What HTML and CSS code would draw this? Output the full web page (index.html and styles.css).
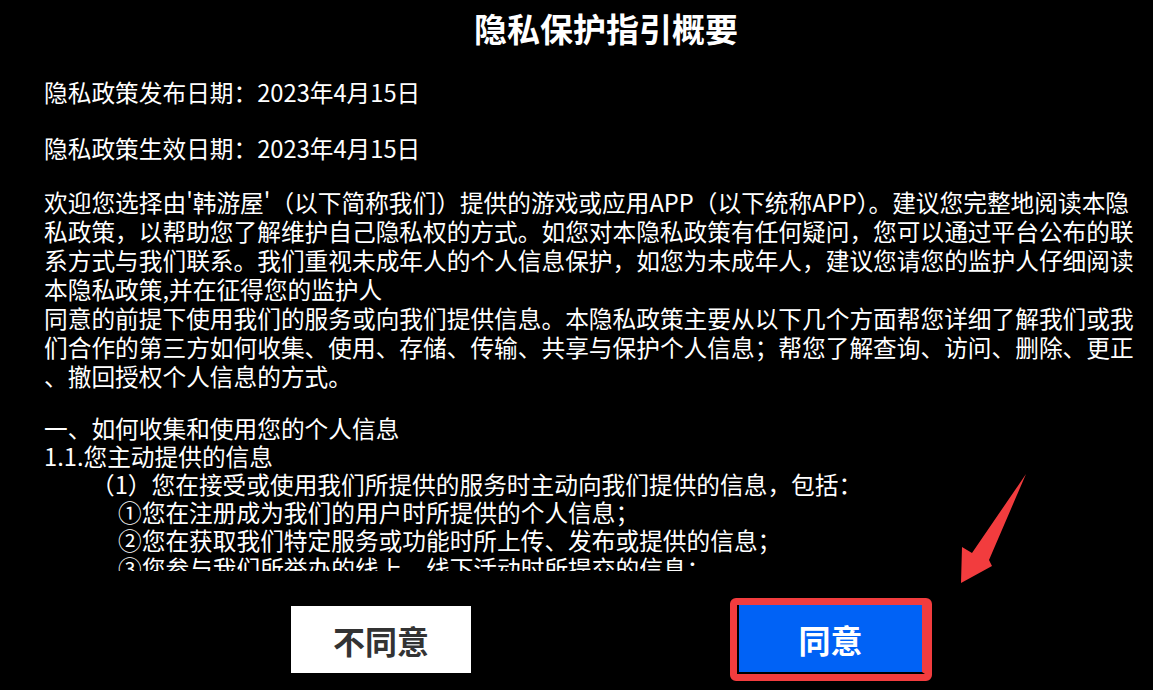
FILE: index.html
```html
<!DOCTYPE html>
<html lang="zh-CN">
<head>
    <meta charset="UTF-8">
    <meta name="viewport" content="width=device-width, initial-scale=1.0">
    <title>隐私保护指引概要</title>
    <link rel="stylesheet" href="styles.css">
</head>
<body>

    <div class="dialog">
        <h1 class="title">隐私保护指引概要</h1>

        <div class="policy">
            <p class="date">隐私政策发布日期：2023年4月15日</p>
            <p class="date date-last">隐私政策生效日期：2023年4月15日</p>
            <p class="intro">欢迎您选择由'韩游屋'（以下简称我们）提供的游戏或应用APP（以下统称APP）。建议您完整地阅读本隐私政策，以帮助您了解维护自己隐私权的方式。如您对本隐私政策有任何疑问，您可以通过平台公布的联系方式与我们联系。我们重视未成年人的个人信息保护，如您为未成年人，建议您请您的监护人仔细阅读本隐私政策,并在征得您的监护人<br>同意的前提下使用我们的服务或向我们提供信息。本隐私政策主要从以下几个方面帮您详细了解我们或我们合作的第三方如何收集、使用、存储、传输、共享与保护个人信息；帮您了解查询、访问、删除、更正、撤回授权个人信息的方式。</p>
            <div class="section">
                <p>一、如何收集和使用您的个人信息</p>
                <p>1.1.您主动提供的信息</p>
                <p class="sub">（1）您在接受或使用我们所提供的服务时主动向我们提供的信息，包括：</p>
                <p class="item">①您在注册成为我们的用户时所提供的个人信息；</p>
                <p class="item">②您在获取我们特定服务或功能时所上传、发布或提供的信息；</p>
                <p class="item">③您参与我们所举办的线上、线下活动时所提交的信息；</p>
            </div>
        </div>

        <div class="buttons">
            <button class="btn-refuse">不同意</button>
            <span class="highlight"><button class="btn-agree">同意</button></span>
        </div>
    </div>

    <!-- red arrow pointing at the agree button -->
    <svg class="arrow" viewBox="0 0 100 140">
        <polygon points="86,14 49,100 52,106 21,123 22,87 32,93" fill="#f23c3e"/>
    </svg>

</body>
</html>
```

FILE: styles.css
```css
* {
    margin: 0;
    padding: 0;
    box-sizing: border-box;
    font-family: "Noto Sans CJK SC", "Noto Sans", sans-serif;
}
body {
    background: #000;
    color: #fff;
    width: 1153px;
    height: 690px;
    overflow: hidden;
    position: relative;
}
.dialog {
    width: 100%;
    height: 690px;
    display: flex;
    flex-direction: column;
}
.title {
    font-size: 33px;
    font-weight: bold;
    line-height: 40px;
    text-align: center;
    padding: 8px 0 0 59px;
}
.policy {
    height: 523px;
    overflow: hidden;
    padding: 30px 9px 0 44px;
    font-size: 23.7px;
    line-height: 28px;
}
.date {
    margin-bottom: 28px;
}
.date-last {
    margin-bottom: 25.5px;
}
.intro {
    line-height: 29px;
    line-break: anywhere;
    margin-bottom: 23.5px;
}
.section p {
    white-space: nowrap;
}
.section .sub {
    padding-left: 47px;
}
.section .item {
    padding-left: 74px;
}
.buttons {
    display: flex;
    align-items: center;
    gap: 259px;
    padding: 27px 0 0 291px;
}
.btn-refuse {
    width: 180px;
    height: 67px;
    background: #fff;
    color: #333;
    font-size: 32px;
    font-weight: bold;
    border: none;
}
.highlight {
    display: flex;
    border: 7px solid #f23c3e;
    border-radius: 6px;
}
.btn-agree {
    width: 188px;
    height: 69px;
    background: #0062f6;
    color: #fff;
    font-size: 32px;
    font-weight: bold;
    border: none;
    border-left: 2px solid #000;
    border-bottom: 2px solid #000;
    border-right: 3px solid #f23c3e;
}
.arrow {
    position: absolute;
    left: 940px;
    top: 460px;
    width: 100px;
    height: 140px;
}
```
